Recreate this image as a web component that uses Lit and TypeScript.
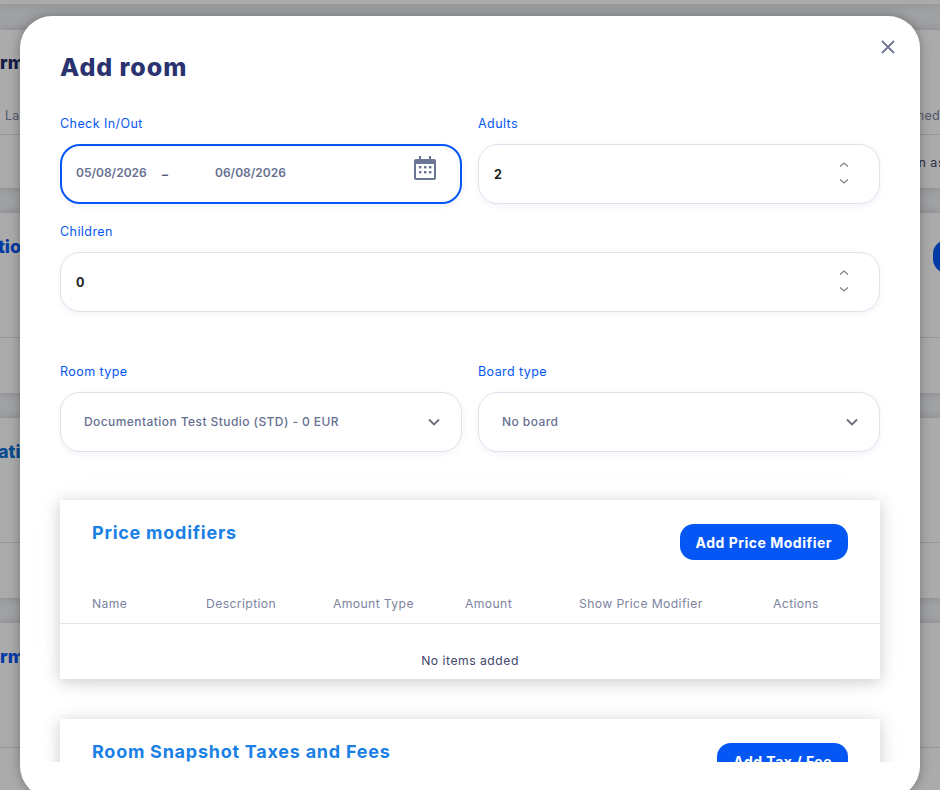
import { LitElement, html, css } from "lit";
import { customElement } from "lit/decorators.js";

@customElement("app-root")
export class AppRoot extends LitElement {
  static styles = css`
    :host { display: block; position: relative; width: 940px; height: 790px; overflow: hidden; background: #fff; font-family: Inter, "Open Sans", "Liberation Sans", sans-serif; }
    * { box-sizing: border-box; }
    .page { display: flex; flex-direction: column; height: 790px; background: #eef0f4; overflow: hidden; }
    .bg-card { background: #fff; flex: none; box-shadow: 0 0 8px rgba(0,0,0,.16); overflow: hidden; display: flex; flex-direction: column; }
    .c-top { height: 4px; margin-bottom: 26px; }
    .c-first { height: 158px; margin-bottom: 25px; }
    .c-mid { height: 180px; margin-bottom: 25px; }
    .c-last { height: 180px; }
    .bg-head { display: flex; justify-content: space-between; align-items: flex-start; height: 0; }
    .bg-title { font-size: 18px; line-height: 22px; font-weight: 800; padding-top: 23px; }
    .t-navy { color: #1f2a6b; padding-top: 22px; }
    .t-blue { color: #0557f5; }
    .t-sky { color: #0f72d8; }
    .clip { margin-left: -2px; }
    .bg-btn { width: 40px; height: 33px; border-radius: 14px; background: #0557f5; margin-right: -33px; margin-top: 27px; }
    .bg-cols { display: flex; justify-content: space-between; font-size: 12.5px; color: #7d83a0; height: 20px; align-items: center; padding: 0 0 0 5px; white-space: nowrap; margin-top: 75px; letter-spacing: .3px; }
    .bg-line { border-bottom: 1px solid #dcdde6; flex: none; }
    .l-first { height: 10px; }
    .l-mid { height: 125px; }
    .bg-row { display: flex; justify-content: flex-end; font-size: 12.5px; color: #41466b; height: 18px; align-items: center; margin: 18px -5px 0 0; white-space: nowrap; letter-spacing: .5px; }
    .overlay { position: absolute; inset: 0; background: rgba(0,0,0,.33); }
    .modal { position: absolute; left: 20px; top: 16px; width: 900px; height: 782px; background: #fff; border-radius: 32px; padding: 34px 40px 0; box-shadow: 0 0 12px rgba(0,0,0,.3); }
    .close { position: absolute; right: 24px; top: 23px; width: 16px; height: 16px; display: block; }
    h1 { margin: 0; font-size: 25px; line-height: 34px; font-weight: 800; color: #2a3270; letter-spacing: .95px; }
    .scroll { height: 678px; overflow: hidden; margin: 0 -40px; padding: 31px 40px 0; }
    .row { display: grid; grid-template-columns: 402px 402px; column-gap: 16px; }
    .field label { display: block; font-size: 12.5px; line-height: 18px; color: #0557f5; margin-bottom: 11px; letter-spacing: .43px; }
    .box { height: 60px; border: 1px solid #e1e1ee; border-radius: 20px; background: #fff; box-shadow: 0 2px 6px rgba(40,50,110,.06); display: flex; align-items: center; justify-content: space-between; }
    .num { padding: 0 30px 0 15px; font-size: 12.5px; font-weight: 700; color: #222; }
    .sel { padding: 0 21px 0 23px; font-size: 12px; font-weight: 500; color: #667091; letter-spacing: .43px; }
    .sel span { padding-bottom: 2px; }
    .date { border: 2px solid #0557f5; padding: 0 23px 0 14px; font-size: 12px; font-weight: 600; color: #667091; }
    .dates { display: flex; align-items: center; }
    .d1 { width: 86px; padding-bottom: 3px; }
    .d2 { padding-bottom: 3px; }
    .dash { width: 53px; font-weight: 700; color: #555b75; }
    .cal { width: 24px; height: 26px; margin-top: -13px; display: block; }
    .spin { display: flex; flex-direction: column; gap: 8px; margin-top: -2px; }
    .spin svg { display: block; width: 10px; height: 8px; }
    .chev { display: block; width: 12px; height: 8px; }
    .children { margin-top: 19px; }
    .types { margin-top: 51px; }
    .panel { margin-top: 48px; background: #fff; box-shadow: 0 3px 14px rgba(40,40,60,.22), 0 0 40px rgba(0,0,0,.03); padding-top: 24px; }
    .head { display: flex; justify-content: space-between; align-items: flex-start; padding: 0 32px; height: 58px; }
    h2 { margin: 0; font-size: 18px; line-height: 18px; font-weight: 700; color: #1a80e5; letter-spacing: .75px; }
    .btn { height: 36px; padding: 0 16px; display: flex; align-items: center; border-radius: 14px; background: #0557f5; color: #fff; font-size: 14px; font-weight: 700; white-space: nowrap; letter-spacing: .5px; }
    .cols { display: flex; height: 42px; align-items: center; border-bottom: 1px solid #e2e3ec; font-size: 12.2px; color: #7d83a0; padding: 1px 0 0 32px; letter-spacing: .38px; }
    .cols span { flex: none; white-space: nowrap; }
    .w-name { width: 114px; }
    .w-desc { width: 127px; }
    .w-type { width: 132px; }
    .w-amt { width: 114px; }
    .w-show { width: 194px; }
    .empty { height: 55px; display: flex; align-items: center; justify-content: center; font-size: 12.2px; color: #41466b; padding-top: 18px; letter-spacing: .5px; }
    .second { margin-top: 40px; }
  `;

  private spinner() {
    return html`<div class="spin">
      <svg viewBox="0 0 10 8"><path d="M1 5.5 5 2l4 3.5" fill="none" stroke="#808080" stroke-width="1.2"/></svg>
      <svg viewBox="0 0 10 8"><path d="M1 2.5 5 6l4-3.5" fill="none" stroke="#808080" stroke-width="1.2"/></svg>
    </div>`;
  }
  private chevron() {
    return html`<svg class="chev" viewBox="0 0 12 8"><path d="M1 1.5 6 6.5l5-5" fill="none" stroke="#6b6f7a" stroke-width="1.8"/></svg>`;
  }

  render() {
    return html`
      <div class="page">
        <div class="bg-card c-top"></div>
        <div class="bg-card c-first">
          <div class="bg-head"><span class="bg-title t-navy">rm</span></div>
          <div class="bg-cols"><span>La</span><span>ned</span></div>
          <div class="bg-line l-first"></div>
          <div class="bg-row"><span>n as</span></div>
        </div>
        <div class="bg-card c-mid">
          <div class="bg-head"><span class="bg-title t-blue clip">tio</span><span class="bg-btn"></span></div>
          <div class="bg-line l-mid"></div>
        </div>
        <div class="bg-card c-mid">
          <div class="bg-head"><span class="bg-title t-sky clip">ati</span></div>
          <div class="bg-line l-mid"></div>
        </div>
        <div class="bg-card c-last">
          <div class="bg-head"><span class="bg-title t-blue">rm</span></div>
          <div class="bg-line l-mid"></div>
        </div>
      </div>
      <div class="overlay"></div>
      <div class="modal">
        <svg class="close" viewBox="0 0 16 16"><path d="M2 2l12 12M14 2 2 14" stroke="#6f7892" stroke-width="1.8" fill="none"/></svg>
        <h1>Add room</h1>
        <div class="scroll">
          <div class="row">
            <div class="field"><label>Check In/Out</label>
              <div class="box date">
                <div class="dates"><span class="d1">05/08/2026</span><span class="dash">–</span><span class="d2">06/08/2026</span></div>
                <svg class="cal" viewBox="0 0 24 26"><path fill="#6b7594" d="M6 1h2v3h8V1h2v3h3a2 2 0 0 1 2 2v17a2 2 0 0 1-2 2H3a2 2 0 0 1-2-2V6a2 2 0 0 1 2-2h3z"/><rect x="3" y="9" width="18" height="14" fill="#fff"/><g fill="#6b7594"><rect x="6" y="11" width="2.4" height="2.4"/><rect x="11" y="11" width="2.4" height="2.4"/><rect x="16" y="11" width="2.4" height="2.4"/><rect x="6" y="16" width="2.4" height="2.4"/><rect x="11" y="16" width="2.4" height="2.4"/><rect x="16" y="16" width="2.4" height="2.4"/></g></svg>
              </div>
            </div>
            <div class="field"><label>Adults</label><div class="box num"><span>2</span>${this.spinner()}</div></div>
          </div>
          <div class="field children"><label>Children</label><div class="box num"><span>0</span>${this.spinner()}</div></div>
          <div class="row types">
            <div class="field"><label>Room type</label><div class="box sel"><span>Documentation Test Studio (STD) - 0 EUR</span>${this.chevron()}</div></div>
            <div class="field"><label>Board type</label><div class="box sel"><span>No board</span>${this.chevron()}</div></div>
          </div>
          <div class="panel">
            <div class="head"><h2>Price modifiers</h2><div class="btn">Add Price Modifier</div></div>
            <div class="cols">
              <span class="w-name">Name</span><span class="w-desc">Description</span><span class="w-type">Amount Type</span><span class="w-amt">Amount</span><span class="w-show">Show Price Modifier</span><span>Actions</span>
            </div>
            <div class="empty">No items added</div>
          </div>
          <div class="panel second">
            <div class="head"><h2>Room Snapshot Taxes and Fees</h2><div class="btn">Add Tax / Fee</div></div>
          </div>
        </div>
      </div>
    `;
  }
}
